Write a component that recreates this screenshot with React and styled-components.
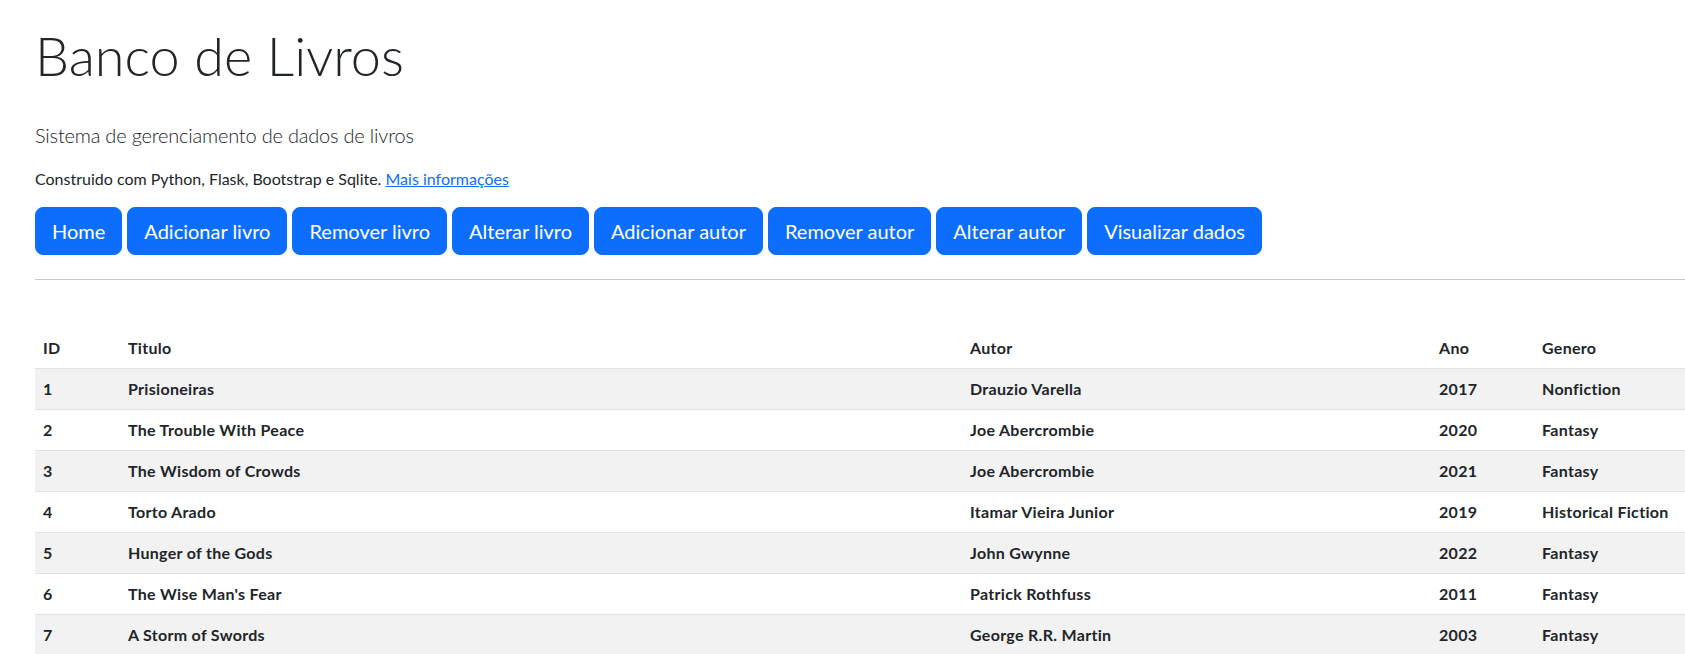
import React from "react";
import styled, { createGlobalStyle } from "styled-components";

const GlobalStyle = createGlobalStyle`
  body {
    margin: 0;
    font-family: "Lato", "Liberation Sans", sans-serif;
    color: #212529;
    background: #fff;
    overflow: hidden;
  }
`;

const menu = [
  "Home",
  "Adicionar livro",
  "Remover livro",
  "Alterar livro",
  "Adicionar autor",
  "Remover autor",
  "Alterar autor",
  "Visualizar dados",
];

const books = [
  { id: 1, titulo: "Prisioneiras", autor: "Drauzio Varella", ano: 2017, genero: "Nonfiction" },
  { id: 2, titulo: "The Trouble With Peace", autor: "Joe Abercrombie", ano: 2020, genero: "Fantasy" },
  { id: 3, titulo: "The Wisdom of Crowds", autor: "Joe Abercrombie", ano: 2021, genero: "Fantasy" },
  { id: 4, titulo: "Torto Arado", autor: "Itamar Vieira Junior", ano: 2019, genero: "Historical Fiction" },
  { id: 5, titulo: "Hunger of the Gods", autor: "John Gwynne", ano: 2022, genero: "Fantasy" },
  { id: 6, titulo: "The Wise Man's Fear", autor: "Patrick Rothfuss", ano: 2011, genero: "Fantasy" },
  { id: 7, titulo: "A Storm of Swords", autor: "George R.R. Martin", ano: 2003, genero: "Fantasy" },
];

const App = () => {
  return (
    <Container>
      <GlobalStyle />
      <Title>Banco de Livros</Title>
      <Lead>Sistema de gerenciamento de dados de livros</Lead>
      <Info>
        Construido com Python, Flask, Bootstrap e Sqlite. <InfoLink href="#">Mais informações</InfoLink>
      </Info>
      <Nav>
        {menu.map((item) => (
          <Btn key={item} href="#">
            {item}
          </Btn>
        ))}
      </Nav>
      <Divider />
      <Table>
        <colgroup>
          <col style={{ width: 85 }} />
          <col style={{ width: 842 }} />
          <col style={{ width: 469 }} />
          <col style={{ width: 103 }} />
          <col />
        </colgroup>
        <thead>
          <tr>
            <Th>ID</Th>
            <Th>Titulo</Th>
            <Th>Autor</Th>
            <Th>Ano</Th>
            <Th>Genero</Th>
          </tr>
        </thead>
        <tbody>
          {books.map((b, i) => (
            <Row key={b.id} $striped={i % 2 === 0}>
              <Td>{b.id}</Td>
              <Td>{b.titulo}</Td>
              <Td>{b.autor}</Td>
              <Td>{b.ano}</Td>
              <Td>{b.genero}</Td>
            </Row>
          ))}
        </tbody>
      </Table>
    </Container>
  );
};

export default App;

const Container = styled.div`
  padding: 22px 0 0 35px;
`;

const Title = styled.h1`
  margin: 0 0 31px;
  font-size: 54px;
  line-height: 67px;
  font-weight: 300;
`;

const Lead = styled.p`
  margin: 0 0 17px;
  font-size: 20px;
  line-height: 30px;
  font-weight: 300;
  letter-spacing: -0.2px;
`;

const Info = styled.p`
  margin: 0 0 16px;
  font-size: 16px;
  line-height: 24px;
`;

const InfoLink = styled.a`
  color: #0d6efd;
  text-decoration: underline;
`;

const Nav = styled.div`
  display: flex;
  flex-wrap: wrap;
  gap: 5px;
`;

const Btn = styled.a`
  display: inline-block;
  padding: 8px 16px;
  font-size: 20px;
  line-height: 30px;
  color: #fff;
  background-color: #0d6efd;
  border: 1px solid #0d6efd;
  border-radius: 8px;
  text-decoration: none;
`;

const Divider = styled.hr`
  margin: 24px 0 48px;
  border: 0;
  border-top: 1px solid #c8c9ca;
`;

const Table = styled.table`
  width: 100%;
  table-layout: fixed;
  border-collapse: collapse;
  font-size: 16px;
  line-height: 24px;
  font-weight: 700;
  letter-spacing: 0.3px;
`;

const Th = styled.th`
  padding: 8px;
  text-align: left;
  font-weight: 700;
  border-bottom: 1px solid #dee2e6;
  white-space: nowrap;
`;

const Row = styled.tr`
  background-color: ${(p) => (p.$striped ? "#f2f2f2" : "#fff")};
`;

const Td = styled.td`
  padding: 8px;
  border-bottom: 1px solid #dee2e6;
  white-space: nowrap;
`;
